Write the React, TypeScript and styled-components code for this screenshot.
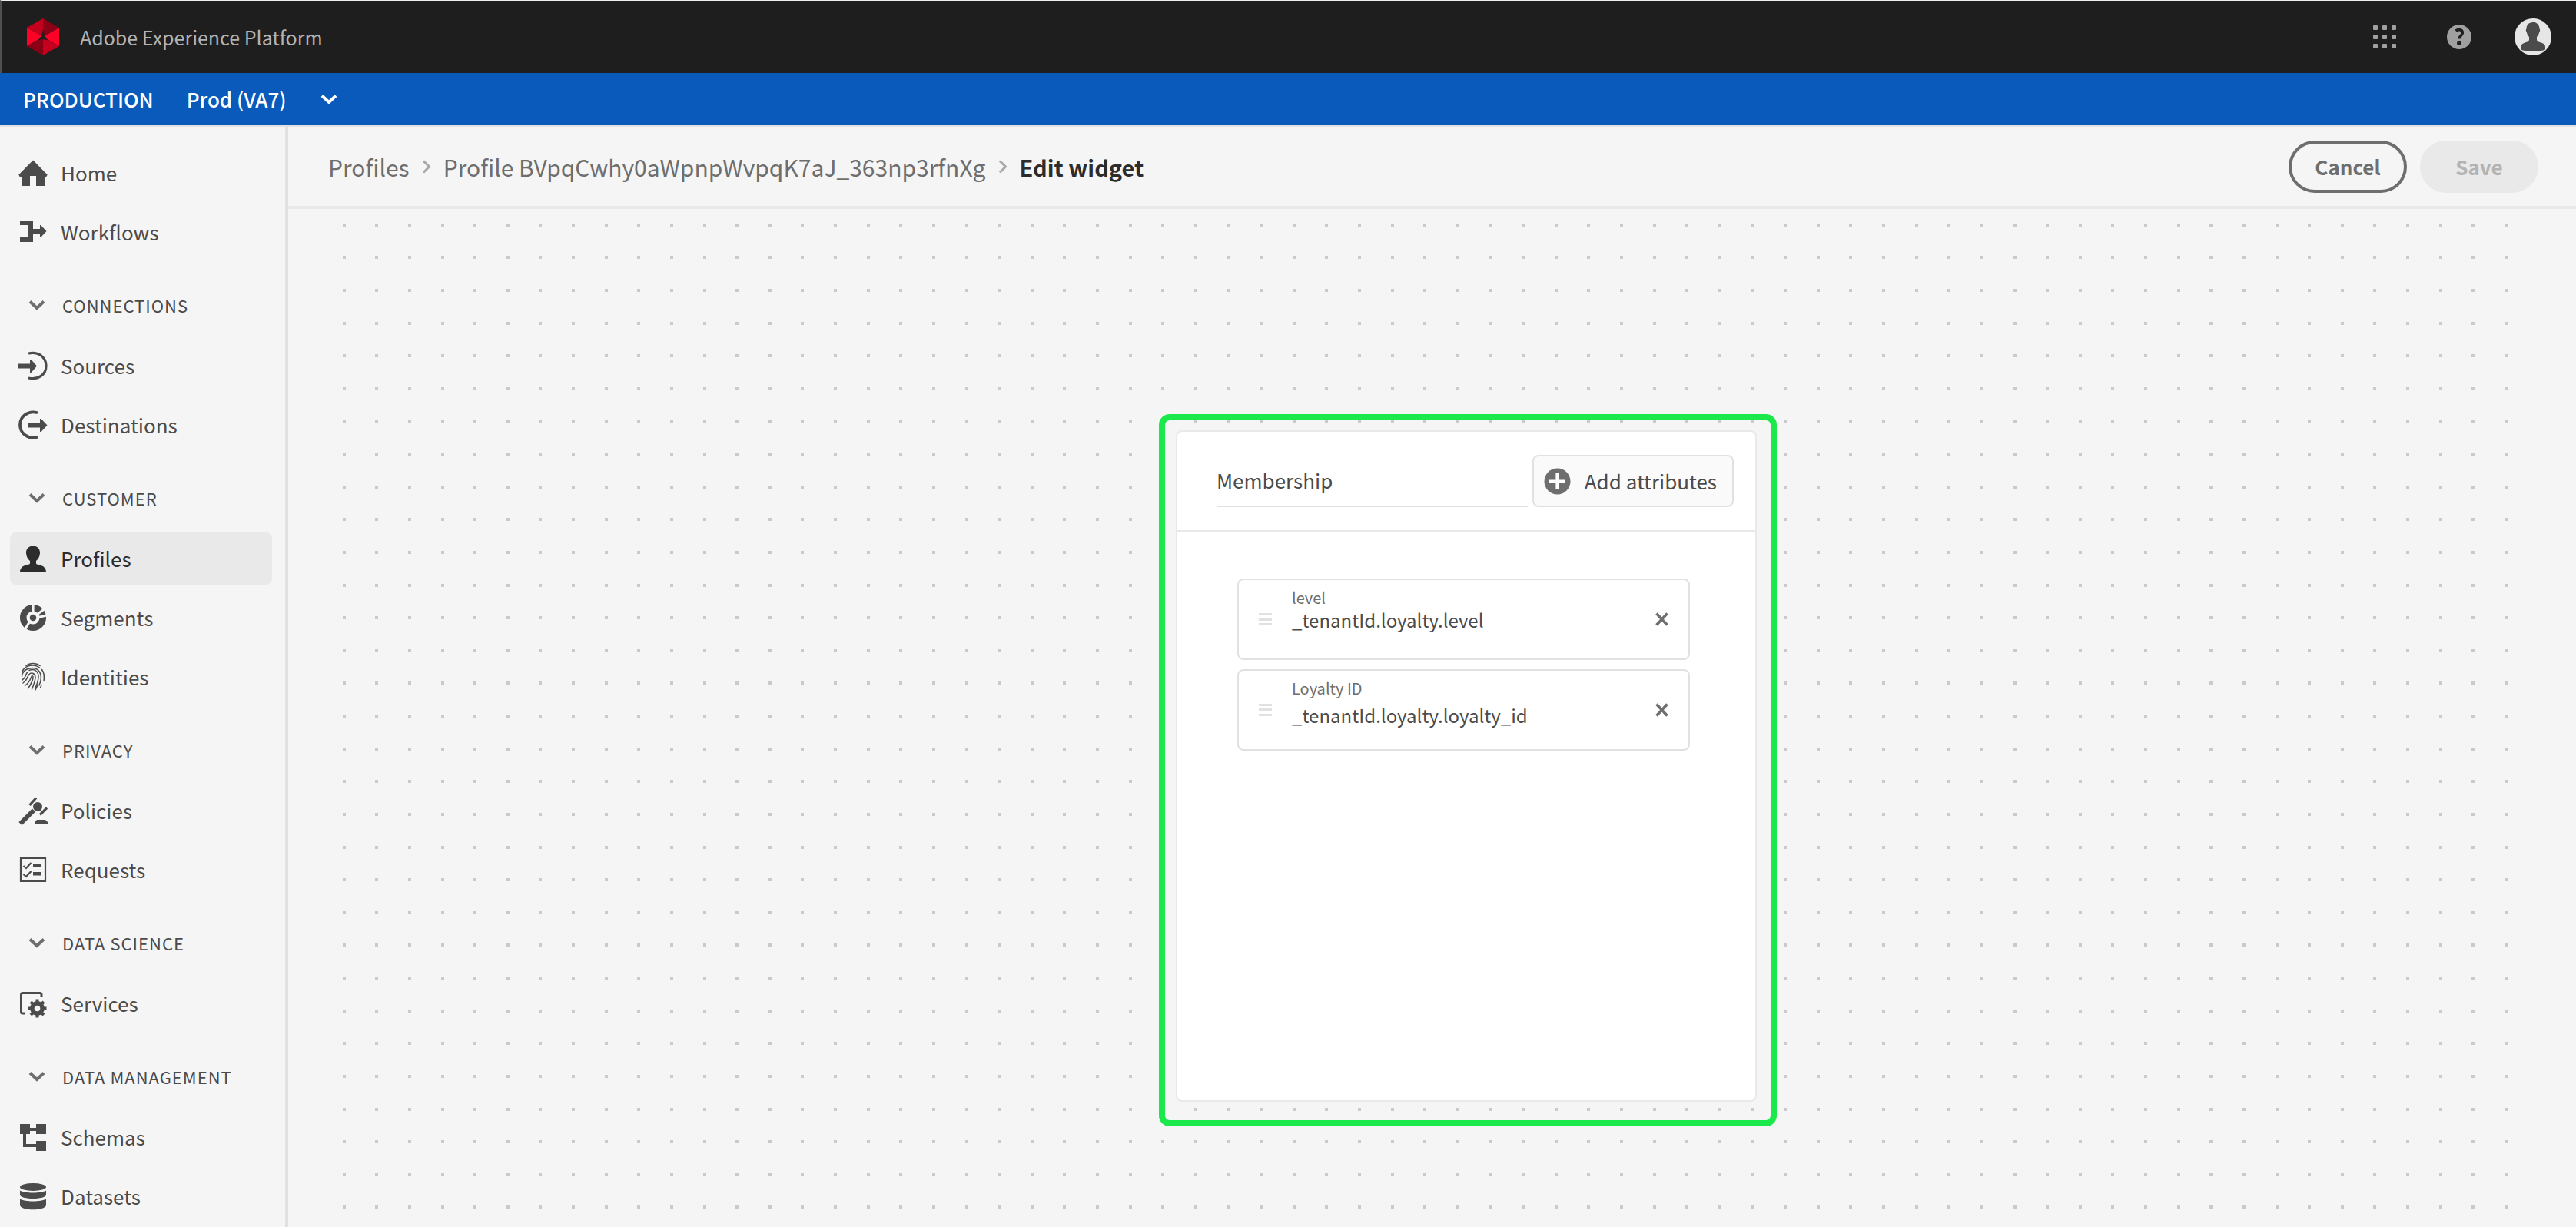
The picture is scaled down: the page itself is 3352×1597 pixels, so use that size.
import React, { useState } from "react";
import styled, { createGlobalStyle } from "styled-components";

const font = `"Noto Sans CJK SC", "Noto Sans", sans-serif`;

const color = {
  page: "#f5f5f5",
  line: "#e1e1e1",
  softLine: "#e9e9e9",
  text: "#4b4b4b",
  strong: "#2c2c2c",
  muted: "#6e6e6e",
  faint: "#b3b3b3",
  brand: "#0a5abb",
  highlight: "#1ae84b",
};

const GlobalStyle = createGlobalStyle`
  *, *::before, *::after { box-sizing: border-box; }
  body { margin: 0; background: ${color.page}; color: ${color.text}; font-family: ${font}; font-size: 26px; line-height: 38px; }
  button, input, select { font: inherit; color: inherit; }
  ul, ol, h1, h2, p { margin: 0; padding: 0; list-style: none; font-weight: inherit; font-size: inherit; }
  svg { display: block; flex: none; }
`;

/* One repeat of the canvas dot grid: eight dots each way over 341px. */
const dotSteps = [0, 42, 85, 128, 170, 213, 255, 298];
const dotPath = dotSteps
  .map((y) => dotSteps.map((x) => `M${x} ${y}h4v4h-4z`).join(""))
  .join("");
const dotTile = `url("data:image/svg+xml,${encodeURIComponent(
  `<svg xmlns="http://www.w3.org/2000/svg" width="341" height="341"><path fill="#cacaca" d="${dotPath}"/></svg>`
)}")`;

const Shell = styled.div`
  display: flex;
  flex-direction: column;
  min-height: 100vh;
`;

const TopBar = styled.header`
  display: flex;
  align-items: center;
  gap: 27px;
  height: 95px;
  padding: 0 32px 0 33px;
  border-top: 1px solid #eeeeee;
  border-left: 2px solid #505050;
  background: #1e1e1e;
  color: ${color.faint};
`;

const ProductName = styled.span`
  flex: 1;
  font-size: 25px;
`;

const TopActions = styled.div`
  display: flex;
  align-items: center;
  gap: 56px;
`;

const IconButton = styled.button`
  display: grid;
  place-items: center;
  padding: 0;
  border: 0;
  background: none;
  color: ${color.muted};
  cursor: pointer;
`;

const LauncherButton = styled(IconButton)`
  margin-right: 10px;
`;

const SandboxBar = styled.div`
  display: flex;
  align-items: center;
  gap: 43px;
  height: 70px;
  padding: 0 30px;
  border-bottom: 2px solid ${color.line};
  background: ${color.brand};
  color: #ffffff;
  font-weight: 500;
`;

const SandboxPicker = styled.div`
  display: grid;
  align-items: center;

  > * { grid-area: 1 / 1; }
  > svg { justify-self: end; pointer-events: none; }
`;

const SandboxSelect = styled.select`
  appearance: none;
  padding: 0 66px 0 0;
  border: 0;
  background: none;
  cursor: pointer;

  option { color: ${color.strong}; }
`;

const Body = styled.div`
  display: flex;
  flex: 1;
`;

const Sidebar = styled.nav`
  width: 375px;
  padding: 26px 17px 5px 13px;
  border-right: 4px solid ${color.line};
`;

const NavList = styled.ul`
  display: flex;
  flex-direction: column;
  gap: 9px;
`;

const NavSection = styled.section`
  margin-top: 29px;
`;

const SectionToggle = styled.button`
  display: flex;
  align-items: center;
  gap: 22px;
  width: 100%;
  height: 64px;
  margin-bottom: 13px;
  padding: 0 24px;
  border: 0;
  background: none;
  font-size: 22px;
  letter-spacing: 1px;
  cursor: pointer;

  > svg { color: ${color.muted}; }
`;

const NavLink = styled.a<{ $active?: boolean }>`
  display: flex;
  align-items: center;
  gap: 17px;
  height: 68px;
  padding: 0 11px;
  border-radius: 8px;
  background: ${(p) => (p.$active ? color.softLine : "transparent")};
  color: ${(p) => (p.$active ? color.strong : color.text)};
  text-decoration: none;
`;

const Main = styled.main`
  display: flex;
  flex: 1;
  flex-direction: column;
  min-width: 0;
`;

const PageHeader = styled.div`
  display: flex;
  align-items: center;
  justify-content: space-between;
  height: 107px;
  padding: 0 49px 0 52px;
  border-bottom: 4px solid ${color.softLine};
`;

const Crumbs = styled.ol`
  display: flex;
  align-items: center;
  color: ${color.muted};
  font-size: 30px;

  li { display: flex; align-items: center; }
  li > svg { margin: 0 16px; color: #a8a8a8; }
  a { color: inherit; text-decoration: none; }
  h1 { color: ${color.strong}; font-size: 29px; font-weight: 700; }
`;

const Actions = styled.div`
  display: flex;
  gap: 17px;
`;

const PillButton = styled.button`
  width: 154px;
  height: 68px;
  padding: 0;
  border: 4px solid ${color.muted};
  border-radius: 34px;
  background: transparent;
  color: ${color.muted};
  font-weight: 700;
  cursor: pointer;

  &:disabled {
    border-color: ${color.softLine};
    background: ${color.softLine};
    color: ${color.faint};
    cursor: default;
  }
`;

const Canvas = styled.div`
  display: flex;
  flex: 1;
  align-items: flex-start;
  justify-content: center;
  padding: 19px 49px 0 71px;
  background: ${dotTile} content-box;
`;

const Highlight = styled.div`
  width: 804px;
  margin: 248px 0 60px 71px;
  padding: 13px 18px 24px 14px;
  border: 8px solid ${color.highlight};
  border-radius: 14px;
`;

const Card = styled.article`
  min-height: 874px;
  border: 2px solid ${color.softLine};
  border-radius: 8px;
  background: #ffffff;
`;

const CardHeader = styled.div`
  display: flex;
  gap: 6px;
  padding: 30px 28px 30px 51px;
  border-bottom: 2px solid ${color.softLine};
`;

const TitleInput = styled.input`
  flex: 1;
  min-width: 0;
  height: 68px;
  padding: 0 0 2px;
  border: 0;
  border-bottom: 2px solid ${color.line};
  background: none;
  outline: none;
`;

const AddButton = styled.button`
  display: flex;
  align-items: center;
  gap: 18px;
  height: 68px;
  padding: 0 20px 0 13px;
  border: 2px solid ${color.line};
  border-radius: 8px;
  background: #fafafa;
  cursor: pointer;

  > svg { color: ${color.muted}; }
`;

const AttributeList = styled.ul`
  display: flex;
  flex-direction: column;
  gap: 12px;
  padding: 61px 85px 61px 78px;
`;

const AttributeRow = styled.li`
  display: flex;
  align-items: center;
  gap: 26px;
  height: 106px;
  padding: 0 26px;
  border: 2px solid ${color.line};
  border-radius: 8px;
`;

const AttributeText = styled.div<{ $gap: number }>`
  display: flex;
  flex: 1;
  flex-direction: column;
  align-self: flex-start;
  gap: ${(p) => p.$gap}px;
  padding-top: 8px;
`;

const AttributeName = styled.p`
  color: ${color.muted};
  font-size: 20px;
  line-height: 30px;
`;

const AttributePath = styled.p`
  font-size: 24px;
  line-height: 28px;
`;

const ChevronDown = () => (
  <svg width="22" height="14" viewBox="0 0 22 14" fill="none" stroke="currentColor" strokeWidth="4" aria-hidden>
    <path d="M2 2.5l9 8.5 9-8.5" />
  </svg>
);

const ChevronRight = () => (
  <svg width="12" height="18" viewBox="0 0 12 18" fill="none" stroke="currentColor" strokeWidth="3" aria-hidden>
    <path d="M2 1.5L9.500 9 2 16.500" />
  </svg>
);

const Logo = () => (
  <svg width="42" height="48" viewBox="0 0 42 48" aria-hidden>
    <path fill="#c4001f" d="M21 0L0 12l21 12z" />
    <path fill="#8c0016" d="M21 0l21 12-21 12z" />
    <path fill="#ff0026" d="M0 12l21 12L0 36zM42 12L21 24l21 12z" />
    <path fill="#8c0016" d="M0 36l21-12v24z" />
    <path fill="#c4001f" d="M42 36L21 24v24z" />
    <path fill="#1e1e1e" d="M21 13.500c.8 7 3 12 8.500 16.300-5.500-3.300-11.500-3.300-17 0C18 25.500 20.200 20.500 21 13.500z" />
  </svg>
);

const Launcher = () => (
  <svg width="30" height="30" viewBox="0 0 30 30" fill="#a0a0a0" aria-hidden>
    {[0, 12, 24].map((y) => [0, 12, 24].map((x) => <rect key={`${x}-${y}`} x={x} y={y} width="6" height="6" rx="1" />))}
  </svg>
);

const Help = () => (
  <svg width="32" height="32" viewBox="0 0 32 32" aria-hidden>
    <circle cx="16" cy="16" r="16" fill="#a0a0a0" />
    <path d="M11.600 8.200c3-2.600 8.700-2 8.700 2.300 0 4-4.300 4-4.300 8" fill="none" stroke="#1e1e1e" strokeWidth="3.600" />
    <circle cx="16" cy="24.200" r="2.900" fill="#1e1e1e" />
  </svg>
);

const Avatar = () => (
  <svg width="48" height="48" viewBox="0 0 48 48" aria-hidden>
    <circle cx="24" cy="24" r="24" fill="#e6e6e6" />
    <path
      fill="#4b4b4b"
      d="M24 5c5.300 0 8.500 3.500 8.500 8.500 1 1 .8 3-.3 4.500-.5 2.500-1.700 4.500-3.200 6v3.500c0 2 1.500 2.800 4 3.600 4 1.300 7 2.300 7 6V40c0 1.500-6 2.500-16 2.500S8.500 41.500 8.500 40v-2.900c0-3.700 3-4.700 6.500-6 2.500-.8 4-1.600 4-3.600V24c-1.500-1.500-2.700-3.500-3.200-6-1.100-1.500-1.300-3.500-.3-4.500C15.500 8.500 18.700 5 24 5z"
    />
  </svg>
);

const AddCircle = () => (
  <svg width="35" height="35" viewBox="0 0 35 35" aria-hidden>
    <circle cx="17.500" cy="17.500" r="17" fill="currentColor" />
    <path d="M17.500 7v21M7 17.500h21" stroke="#ffffff" strokeWidth="4.200" />
  </svg>
);

const Handle = () => (
  <svg width="17" height="18" viewBox="0 0 17 18" fill="#e1e1e1" aria-hidden>
    <path d="M0 1h17v3H0zM0 7h17v4H0zM0 14h17v3H0z" />
  </svg>
);

const Cross = () => (
  <svg width="17" height="18" viewBox="0 0 17 18" fill="none" stroke="currentColor" strokeWidth="3.600" aria-hidden>
    <path d="M1.500 1.500l14 15M15.500 1.500l-14 15" />
  </svg>
);

const NavGlyph = ({ children }: { children: React.ReactNode }) => (
  <svg width="38" height="38" viewBox="0 0 38 38" fill="currentColor" aria-hidden>
    {children}
  </svg>
);

const gearTeeth = [0, 45, 90, 135, 180, 225, 270, 315];

const glyphs: Record<string, React.ReactNode> = {
  Home: <path d="M19 2.500L37.700 21.500 36.300 24H34v12H23V23h-8v13H4V24H1.700L.3 21.500z" />,
  Workflows: <path d="M2 4h17v11h9v-5h1l7.500 8-7.500 8h-1v-5h-9v11H2v-6h11V10H2z" />,
  Sources: (
    <>
      <path d="M0 16.500h15V11h1.500L24 19.500 16.500 28H15v-5.500H0z" />
      <path d="M13 3c13-3 23 5 23 16.200S26 38 13 35" fill="none" stroke="currentColor" strokeWidth="3.200" />
    </>
  ),
  Destinations: (
    <>
      <path d="M13 16.800h15V11h1.500l8 8.500-8 8.500H28v-5.500H13z" />
      <path d="M25 3.300C12.500-.5 2 8 2 19s10.500 19.500 23 15.700" fill="none" stroke="currentColor" strokeWidth="3.800" />
    </>
  ),
  Profiles: (
    <path d="M19 2.500c5.500 0 9 3.500 9 9 0 4.500-2 8-5 10.500v3c0 1 .8 1.600 2 1.800 6.500 1 11 4 11 9.700H2c0-5.700 4.500-8.700 11-9.700 1.200-.2 2-.8 2-1.800v-3c-3-2.500-5-6-5-10.500 0-5.500 3.500-9 9-9z" />
  ),
  Segments: (
    <>
      <circle cx="19" cy="19" r="12.800" fill="none" stroke="currentColor" strokeWidth="8.500" />
      <circle cx="19" cy="19" r="4.300" />
      <path d="M19 12V0M24 15l12-9M26 18.500l12-3M14 25L7 37" stroke="#f5f5f5" strokeWidth="3.200" />
    </>
  ),
  Identities: (
    <g fill="none" stroke="currentColor" strokeWidth="1.500" strokeLinecap="round">
      <path d="M10 4.500C15 .500 23 .500 28 4.500" />
      <path d="M5 12C9 3 21 2 28 7.500M30.500 9.500c3 4 3.500 9 2.500 15" />
      <path d="M4.500 18C6 6.500 22 4.500 27.500 12.500c2.500 4 2.500 10.500-.5 17.500" />
      <path d="M5 23c5-3 3.500-6 6.500-10M14 10.500c6-3 12 1 12 8 0 5-1.500 9.500-4 14.500" />
      <path d="M6 27c6-4 5-8 8-11.500 3-3 8-1 8 4 0 4.500-2 9.500-4.500 15.500" />
      <path d="M8.500 30.500c6-4 7-8.500 8.500-12 1-1.500 2.500-.5 2 2-.8 4-3 8.500-6.500 13.500" />
      <path d="M22 36c1-2 2-4 2.500-5.500M28.500 33l1.500-3" />
    </g>
  ),
  Policies: (
    <>
      <circle cx="25" cy="14" r="6" />
      <path d="M2.500 36L20 18.500" stroke="currentColor" strokeWidth="6" />
      <path d="M14.500 12L23 2.500M28 24.500l9-9" stroke="currentColor" strokeWidth="3.200" />
      <path d="M21 37v-3l3-3h11l3 3v3z" />
    </>
  ),
  Requests: (
    <>
      <path d="M3 4h32v30H3zM6.500 14l3.500 3 6.500-7M6.500 25l3.500 3 6.500-7" fill="none" stroke="currentColor" strokeWidth="2.200" />
      <path d="M19 11h11v5H19zM19 22h11v4.500H19z" />
    </>
  ),
  Services: (
    <>
      <path d="M30 11V7.500Q30 5.500 28 5.500H5.500Q3.500 5.500 3.500 7.500V30Q3.500 32 5.500 32H9" fill="none" stroke="currentColor" strokeWidth="3" />
      <circle cx="24.500" cy="25.500" r="6.600" fill="none" stroke="currentColor" strokeWidth="5.600" />
      {gearTeeth.map((a) => (
        <rect key={a} x="22.500" y="13.500" width="4" height="5" transform={`rotate(${a} 24.5 25.5)`} />
      ))}
    </>
  ),
  Schemas: <path d="M2 2h13v5h8V2h13v13H23v-4h-8v4h-5v13h13v-4h13v13H23v-5H6V15H2z" />,
  Datasets: (
    <>
      <ellipse cx="19" cy="7" rx="17" ry="5" />
      <path d="M2 11.500c6 4 28 4 34 0v6c-2 6-32 6-34 0zM2 22.500c6 4 28 4 34 0V31c-2 7-32 7-34 0z" />
    </>
  ),
};

const sections = [
  { title: "CONNECTIONS", items: ["Sources", "Destinations"] },
  { title: "CUSTOMER", items: ["Profiles", "Segments", "Identities"] },
  { title: "PRIVACY", items: ["Policies", "Requests"] },
  { title: "DATA SCIENCE", items: ["Services"] },
  { title: "DATA MANAGEMENT", items: ["Schemas", "Datasets"] },
];

const attributes = [
  { name: "level", path: "_tenantId.loyalty.level", gap: 0 },
  { name: "Loyalty ID", path: "_tenantId.loyalty.loyalty_id", gap: 6 },
];

const NavItems = ({ items }: { items: string[] }) => (
  <NavList>
    {items.map((item) => (
      <li key={item}>
        <NavLink href="#" $active={item === "Profiles"} aria-current={item === "Profiles" ? "page" : undefined}>
          <NavGlyph>{glyphs[item]}</NavGlyph>
          {item}
        </NavLink>
      </li>
    ))}
  </NavList>
);

export default function App() {
  const [title, setTitle] = useState("Membership");

  return (
    <Shell>
      <GlobalStyle />
      <TopBar>
        <Logo />
        <ProductName>Adobe Experience Platform</ProductName>
        <TopActions>
          <LauncherButton aria-label="App launcher"><Launcher /></LauncherButton>
          <IconButton aria-label="Help"><Help /></IconButton>
          <IconButton aria-label="Account"><Avatar /></IconButton>
        </TopActions>
      </TopBar>

      <SandboxBar>
        <label htmlFor="sandbox">PRODUCTION</label>
        <SandboxPicker>
          <SandboxSelect id="sandbox">
            <option>Prod (VA7)</option>
          </SandboxSelect>
          <ChevronDown />
        </SandboxPicker>
      </SandboxBar>

      <Body>
        <Sidebar>
          <NavItems items={["Home", "Workflows"]} />
          {sections.map((section) => (
            <NavSection key={section.title}>
              <SectionToggle aria-expanded="true">
                <ChevronDown />
                {section.title}
              </SectionToggle>
              <NavItems items={section.items} />
            </NavSection>
          ))}
        </Sidebar>

        <Main>
          <PageHeader>
            <Crumbs>
              <li><a href="#">Profiles</a><ChevronRight /></li>
              <li><a href="#">Profile BVpqCwhy0aWpnpWvpqK7aJ_363np3rfnXg</a><ChevronRight /></li>
              <li><h1>Edit widget</h1></li>
            </Crumbs>
            <Actions>
              <PillButton>Cancel</PillButton>
              <PillButton disabled>Save</PillButton>
            </Actions>
          </PageHeader>

          <Canvas>
            <Highlight>
              <Card>
                <CardHeader>
                  <TitleInput aria-label="Widget title" value={title} onChange={(e) => setTitle(e.target.value)} />
                  <AddButton><AddCircle />Add attributes</AddButton>
                </CardHeader>
                <AttributeList>
                  {attributes.map((attribute) => (
                    <AttributeRow key={attribute.path}>
                      <Handle />
                      <AttributeText $gap={attribute.gap}>
                        <AttributeName>{attribute.name}</AttributeName>
                        <AttributePath>{attribute.path}</AttributePath>
                      </AttributeText>
                      <IconButton aria-label={`Remove ${attribute.name}`}><Cross /></IconButton>
                    </AttributeRow>
                  ))}
                </AttributeList>
              </Card>
            </Highlight>
          </Canvas>
        </Main>
      </Body>
    </Shell>
  );
}
